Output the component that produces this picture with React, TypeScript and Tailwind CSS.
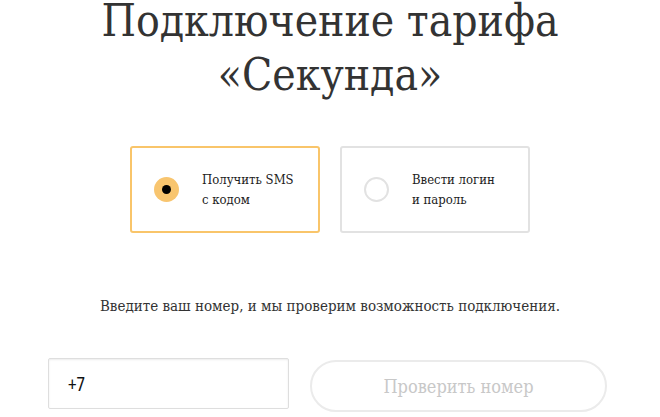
export default function App() {
  return (
    <div className="flex h-[417px] w-[660px] flex-col items-center overflow-hidden bg-white font-['DejaVu_Serif_Condensed','DejaVu_Serif',serif] [font-stretch:condensed] text-[#333]">
      <h1 className="text-center text-[44px] font-light text-[#333]">
        <span className="block leading-[42px]">Подключение тарифа</span>
        <span className="block leading-[66px]">«Секунда»</span>
      </h1>

      <div className="mt-[38px] flex gap-5">
        <label className="flex h-[87px] w-[190px] items-center rounded-[3px] border-2 border-[#f9c56a] pl-[22px]">
          <span className="flex h-[25px] w-[25px] items-center justify-center rounded-full bg-[#f8c56f]">
            <span className="h-[9px] w-[9px] rounded-full bg-black" />
          </span>
          <span className="ml-[23px] text-[13px] leading-[20px] text-[#222]">
            Получить SMS
            <br />с кодом
          </span>
        </label>
        <label className="flex h-[87px] w-[190px] items-center rounded-[3px] border-2 border-[#e2e2e2] pl-[22px]">
          <span className="h-[25px] w-[25px] rounded-full border-2 border-[#e2e2e2]" />
          <span className="ml-[23px] text-[13px] leading-[20px] text-[#222]">
            Ввести логин
            <br />и пароль
          </span>
        </label>
      </div>

      <p className="mt-[63px] text-center text-[15px] leading-[20px] text-[#333]">
        Введите ваш номер, и мы проверим возможность подключения.
      </p>

      <div className="mt-[42px] flex w-full items-start gap-[21px] pl-[48px]">
        <div className="flex h-[51px] w-[241px] items-center rounded-[2px] border border-[#dedede] pl-[19px] font-['Open_Sans',sans-serif] text-[20px] text-[#111] shadow-[inset_0_1px_2px_rgba(0,0,0,0.08)]">
          +7
        </div>
        <button className="mt-[2px] flex h-[52px] w-[297px] items-center justify-center rounded-full border-2 border-[#ebebeb] text-[18px] text-[#c8c8c8]">
          Проверить номер
        </button>
      </div>
    </div>
  );
}
